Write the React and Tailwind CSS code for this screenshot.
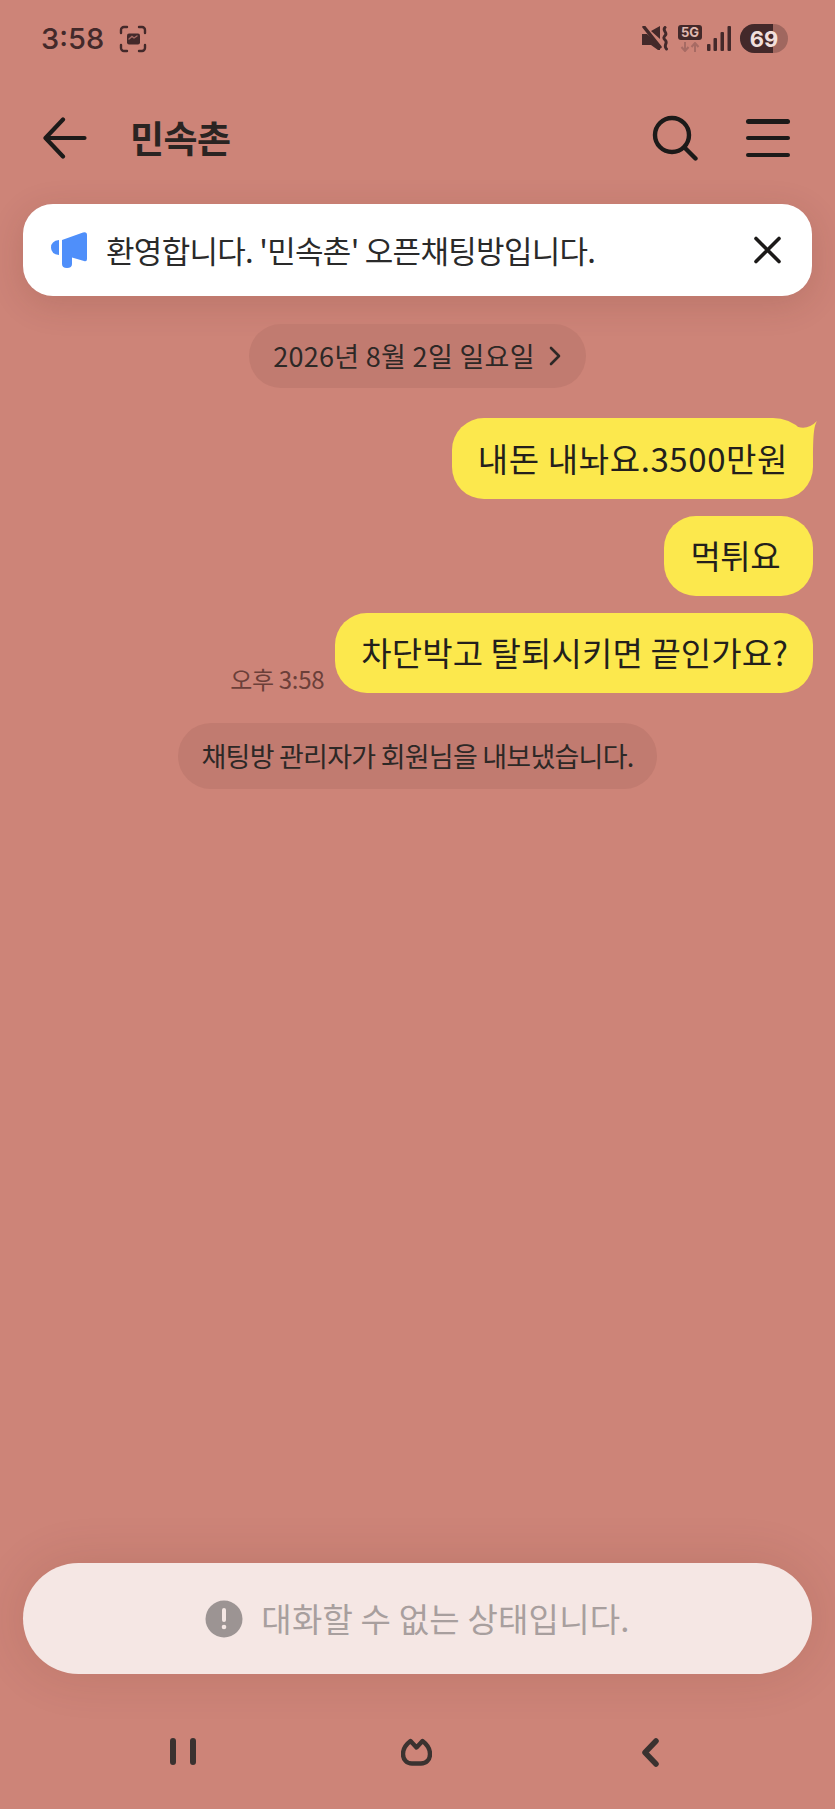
import React from "react";

const Bubble = ({ children, tail, className = "" }) => (
  <div className={`relative flex items-center rounded-[32px] bg-[#fce84d] pl-[26px] text-[33px] text-[#231f1c] ${className}`}>
    {tail && (
      <svg className="absolute right-[-4px] top-0" width="22" height="44" viewBox="0 0 22 44">
        <path d="M3 9C10 11 16 9 22 3C19 8 18 16 18 44L3 44Z" fill="#fce84d" />
      </svg>
    )}
    {children}
  </div>
);

const StatusBar = () => (
  <div className="flex h-[76px] items-center justify-between pl-[41px] pr-[47px] pt-[1px]">
    <div className="flex items-center gap-[15px]">
      <span className="font-['Inter',sans-serif] text-[29px] font-medium leading-none text-[#43292a]">3:58</span>
      <svg width="28" height="28" viewBox="0 0 28 28" fill="none" stroke="#43292a" strokeWidth="2.4" strokeLinecap="round">
        <path d="M2 8V5a3 3 0 0 1 3-3h3M20 2h3a3 3 0 0 1 3 3v3M26 20v3a3 3 0 0 1-3 3h-3M8 26H5a3 3 0 0 1-3-3v-3" />
        <rect x="8" y="8.500" width="13" height="11" rx="2" fill="#43292a" stroke="none" />
        <path d="M10 14l3-2.500 2 1.500 3-2" stroke="#a76b64" strokeWidth="1.400" />
      </svg>
    </div>
    <div className="flex items-center">
      <svg width="27" height="25" viewBox="0 0 27 25" className="mr-[9px]">
        <path d="M0 8h5L18 19v5h-2l-7-5H0z" fill="#43292a" />
        <path d="M9 5l9-5v13z" fill="#43292a" />
        <path d="M2 1l16 20" stroke="#43292a" strokeWidth="3.400" strokeLinecap="round" />
        <path d="M23 1.500c-3 3 2.500 5 .5 7.500s-2.500 3 0 5.500-2.500 5 1 8.500" stroke="#43292a" strokeWidth="3" fill="none" strokeLinecap="round" />
      </svg>
      <div className="mr-[5px] flex w-[24px] flex-col items-center gap-[2px]">
        <span className="flex h-[15px] w-[24px] items-center justify-center rounded-[3px] bg-[#43292a] font-['Inter',sans-serif] text-[13px] font-bold leading-none text-[#e0b9b0]">5G</span>
        <svg width="20" height="10" viewBox="0 0 20 10" fill="none" stroke="#a76b64" strokeWidth="2">
          <path d="M5 0v8M1.500 5l3.500 4 3.500-4M15 10V2M11.500 5L15 1l3.500 4" />
        </svg>
      </div>
      <svg width="24" height="25" viewBox="0 0 24 25" fill="#43292a" className="mr-[9px]">
        <rect x="0" y="18" width="3.500" height="7" rx="1" />
        <rect x="6.500" y="12" width="3.500" height="13" rx="1" />
        <rect x="13.500" y="6" width="3.500" height="19" rx="1" />
        <rect x="20.500" y="0" width="3.500" height="25" rx="1" />
      </svg>
      <div className="relative flex h-[29px] w-[48px] items-center justify-center overflow-hidden rounded-full bg-[#a0675f]">
        <div className="absolute inset-y-0 left-0 w-[33px] bg-[#43292a]" />
        <span className="relative font-['Inter',sans-serif] text-[22px] font-bold leading-none text-[#f0dfdc]">69</span>
      </div>
    </div>
  </div>
);

const Header = () => (
  <div className="flex h-[100px] items-center justify-between pl-[43px] pr-[45px] pt-[24px]">
    <div className="flex items-center gap-[43px]">
      <svg width="44" height="42" viewBox="0 0 44 42" fill="none" stroke="#1c1a19" strokeWidth="4.200" strokeLinecap="round" strokeLinejoin="round">
        <path d="M41.500 21H3M20 2.500L2.500 21 20 39.500" />
      </svg>
      <span className="text-[37px] font-bold tracking-[-0.5px] text-[#2a2422]">민속촌</span>
    </div>
    <div className="flex items-center gap-[48px]">
      <svg width="46" height="46" viewBox="0 0 46 46" fill="none" stroke="#1c1a19" strokeWidth="4.400" strokeLinecap="round">
        <circle cx="20" cy="20" r="17" />
        <path d="M32.500 32.500L43.500 43.500" />
      </svg>
      <div className="flex h-[38px] w-[44px] flex-col justify-between">
        <div className="h-[4.500px] rounded-full bg-[#1c1a19]" />
        <div className="h-[4.500px] rounded-full bg-[#1c1a19]" />
        <div className="h-[4.500px] rounded-full bg-[#1c1a19]" />
      </div>
    </div>
  </div>
);

const Notice = () => (
  <div className="mx-[23px] flex h-[92px] items-center justify-between rounded-[30px] bg-white pl-[28px] pr-[31px] shadow-[0_8px_34px_rgba(90,40,30,0.16)]">
    <div className="flex items-center gap-[18px]">
      <svg width="37" height="38" viewBox="0 0 37 38" fill="#4f8ffa">
        <path d="M8 9V24Q0 23 0 16.500Q0 10 8 9Z" />
        <path d="M11 9L32 1.500Q36 .5 36 4V28Q36 31 33 30L21 26.500V33Q21 37 16 37Q11 37 11 33Z" />
      </svg>
      <span className="text-[31px] tracking-[-0.7px] text-[#2a2a2a]">환영합니다. '민속촌' 오픈채팅방입니다.</span>
    </div>
    <svg width="28" height="28" viewBox="0 0 28 28" fill="none" stroke="#1c1a19" strokeWidth="3.600" strokeLinecap="round">
      <path d="M3 2.500l23 23M26 2.500l-23 23" />
    </svg>
  </div>
);

const Pill = ({ children, className = "" }) => (
  <div className={`flex items-center rounded-full bg-[#c17b70] px-[24px] text-[27px] text-[#2d2826] ${className}`}>{children}</div>
);

const NavBar = () => (
  <div className="flex h-[135px] items-start pl-[170px] pt-[64px]">
    <svg width="26" height="27" viewBox="0 0 26 27" stroke="#3a3230" strokeWidth="6" strokeLinecap="round">
      <path d="M3 3v21M23 3v21" />
    </svg>
    <svg width="31" height="28" viewBox="0 0 31 28" fill="none" stroke="#3a3230" strokeWidth="4.400" strokeLinejoin="round" className="ml-[205px]">
      <path d="M9.500 3l6 6.500 6-6.500c4 3 7.500 8 7.500 13 0 6-4 9.500-9 9.500h-9c-5 0-9-3.500-9-9.500 0-5 3.500-10 7.500-13z" />
    </svg>
    <svg width="17" height="29" viewBox="0 0 17 29" fill="none" stroke="#3a3230" strokeWidth="5.500" strokeLinecap="round" strokeLinejoin="round" className="ml-[210px]">
      <path d="M14 3L3 14.500 14 26" />
    </svg>
  </div>
);

export default function App() {
  return (
    <div className="flex h-[1809px] w-[835px] flex-col overflow-hidden bg-[#cd8478] font-['Noto_Sans_CJK_KR','Noto_Sans',sans-serif]">
      <StatusBar />
      <Header />
      <div className="h-[28px]" />
      <Notice />
      <div className="flex flex-1 flex-col items-center pt-[28px]">
        <Pill className="h-[64px] gap-[13px] tracking-[0.3px]">
          2026년 8월 2일 일요일
          <svg width="14" height="22" viewBox="0 0 14 22" fill="none" stroke="#2d2826" strokeWidth="2.600" strokeLinecap="round" strokeLinejoin="round">
            <path d="M3 3l8 8-8 8" />
          </svg>
        </Pill>
        <div className="mt-[30px] flex w-full flex-col items-end gap-[17px] pr-[22px]">
          <Bubble tail className="h-[81px] rounded-tr-[40px] pr-[25px] tracking-[0.6px]">내돈 내놔요.3500만원</Bubble>
          <Bubble className="h-[80px] pr-[33px] tracking-[-0.5px]">먹튀요</Bubble>
          <div className="flex items-end gap-[11px]">
            <span className="pb-[2px] text-[24px] leading-none tracking-[-0.3px] text-[#6b3f39]">오후 3:58</span>
            <Bubble className="h-[80px] pr-[25px] tracking-[0.1px]">차단박고 탈퇴시키면 끝인가요?</Bubble>
          </div>
        </div>
        <Pill className="mt-[30px] h-[66px] tracking-[-0.76px]">채팅방 관리자가 회원님을 내보냈습니다.</Pill>
      </div>
      <div className="mx-[23px] flex h-[111px] items-center justify-center gap-[18px] rounded-[56px] bg-[#f5e7e4] shadow-[0_0_50px_rgba(90,40,30,0.14)]">
        <svg width="38" height="38" viewBox="0 0 38 38">
          <circle cx="19" cy="19" r="18.500" fill="#9c9493" />
          <rect x="17" y="8" width="4" height="14" rx="2" fill="#f5e7e4" />
          <circle cx="19" cy="27" r="2.300" fill="#f5e7e4" />
        </svg>
        <span className="text-[33px] tracking-[0.2px] text-[#a89f9e]">대화할 수 없는 상태입니다.</span>
      </div>
      <NavBar />
    </div>
  );
}
